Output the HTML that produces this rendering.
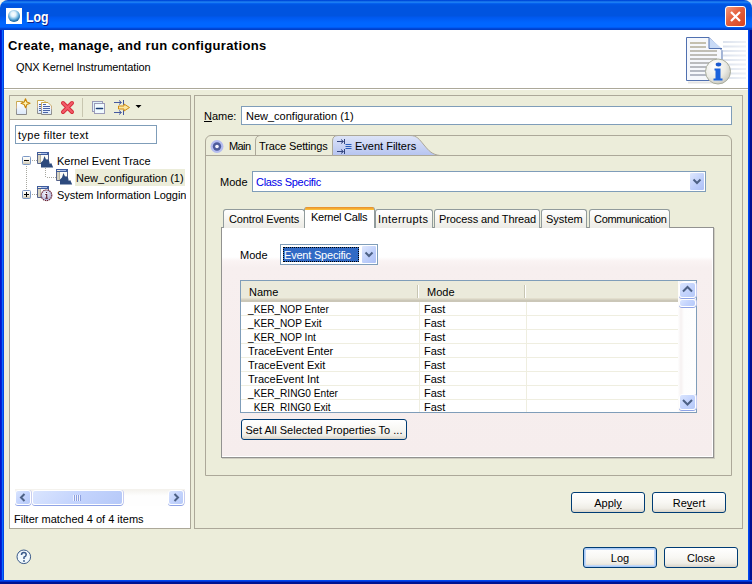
<!DOCTYPE html>
<html><head><meta charset="utf-8">
<style>
*{box-sizing:border-box;margin:0;padding:0}
html,body{width:752px;height:584px;overflow:hidden;background:#f2f1ea}
body{position:relative;font-family:"Liberation Sans",sans-serif;font-size:11px;color:#000}
.a{position:absolute}
.t{position:absolute;white-space:nowrap;line-height:13px}
svg{position:absolute;overflow:visible}
#win{left:0;top:0;width:752px;height:584px;background:#ecedda;border-radius:8px 8px 0 0;overflow:hidden}
#title{left:0;top:0;width:752px;height:30px;background:linear-gradient(to bottom,#0047d5 0px,#0050e0 1px,#2a8ef0 2px,#0a6af5 3px,#0058e6 4px,#0054e0 6px,#0054e0 16px,#0058ee 17px,#0062fa 21px,#0066ff 23px,#0066ff 27px,#0050e8 28px,#0040c8 29px,#0040c8 30px)}
#lb{left:0;top:30px;width:4px;height:554px;background:linear-gradient(to right,#0016c8 0,#0016c8 1px,#0022d8 1px,#0022d8 2px,#0a6cff 2px,#0a6cff 3px,#0044e6 3px)}
#rb{left:748px;top:30px;width:4px;height:554px;background:linear-gradient(to right,#0048f0 0,#0048f0 1px,#0030d0 1px,#0030d0 2px,#001290 2px)}
#bb{left:0;top:580px;width:752px;height:4px;background:linear-gradient(to bottom,#0048f0 0,#0048f0 1px,#0030d0 1px,#0030d0 2px,#001290 2px)}
#hdr{left:4px;top:30px;width:744px;height:59px;background:#fff;border-bottom:1px solid #aca899}
.box{position:absolute;border:1px solid #aca899}
.tb{position:absolute;background:#fff;border:1px solid #7f9db9}
.btn{position:absolute;border:1px solid #003c74;border-radius:3px;background:linear-gradient(to bottom,#fff 0%,#f8f7f3 50%,#efede6 80%,#d8d3c8 100%);text-align:center;line-height:19px;padding-top:1px}
.xtab{position:absolute;top:209px;height:19px;border:1px solid #919b9c;border-bottom:none;border-radius:3px 3px 0 0;background:linear-gradient(to bottom,#fff,#f4f3ee 60%,#ecebe6)}
.cbb{position:absolute;width:16px;border:1px solid #fff;border-radius:2px;background:linear-gradient(135deg,#dfe8fe,#bccdfa 60%,#aec0f6)}
.row{position:absolute;left:241px;width:437px;height:14px;border-bottom:1px solid #f0efe5}
.sbb{position:absolute;border:1px solid #fff;border-radius:3px;background:linear-gradient(135deg,#dae5fe,#c4d4fd 50%,#b6c9f8);box-shadow:0 1px 0 #8fa3e6,1px 0 0 #c7cdf0}
</style></head><body>
<div id="win" class="a">
 <div id="title" class="a"></div>
 <!-- title icon -->
 <div class="a" style="left:6px;top:8px;width:16px;height:16px;background:#fff"></div>
 <svg style="left:6px;top:8px" width="16" height="16"><defs><radialGradient id="gl" cx="45%" cy="35%" r="60%"><stop offset="0" stop-color="#fff"/><stop offset=".35" stop-color="#e4f2fb"/><stop offset=".7" stop-color="#6fb4de"/><stop offset="1" stop-color="#1f6aa8"/></radialGradient></defs><circle cx="8" cy="8" r="6" fill="url(#gl)"/></svg>
 <div class="t" style="left:26px;top:10.5px;font-size:14px;font-weight:bold;color:#fff;text-shadow:1px 1px 0 #0a1e8c;transform:scaleX(0.88);transform-origin:0 0">Log</div>
 <!-- close btn -->
 <div class="a" style="left:725px;top:6px;width:21px;height:21px;border:1px solid #fff;border-radius:3px;background:linear-gradient(135deg,#f39a7c 0%,#e5603d 45%,#d8431f 100%)"></div>
 <svg style="left:725px;top:6px" width="21" height="21"><path d="M6 6L15 15M15 6L6 15" stroke="#fff" stroke-width="2.2"/></svg>

 <div id="hdr" class="a"></div>
 <div class="a" style="left:4px;top:89px;width:744px;height:1px;background:#fff"></div>
 <div class="t" style="left:8px;top:39px;font-size:13px;font-weight:bold;letter-spacing:0.34px">Create, manage, and run configurations</div>
 <div class="t" style="left:16px;top:61px;letter-spacing:-0.12px">QNX Kernel Instrumentation</div>
 <!-- header info icon -->
 <svg style="left:680px;top:30px" width="68" height="58">
  <defs>
   <linearGradient id="st" x1="0" y1="0" x2="1" y2="0"><stop offset="0" stop-color="#d8dfec"/><stop offset="1" stop-color="#eef1f6"/></linearGradient>
   <radialGradient id="ic" cx="35%" cy="30%" r="75%"><stop offset="0" stop-color="#ffffff"/><stop offset=".6" stop-color="#ecece6"/><stop offset="1" stop-color="#c8c8c0"/></radialGradient>
   <linearGradient id="dl" x1="0" y1="0" x2="0" y2="1"><stop offset="0" stop-color="#b4ae96"/><stop offset="1" stop-color="#9ea4b4"/></linearGradient>
  </defs>
  <g stroke="url(#st)" stroke-width="2.2" opacity=".9"><path d="M43 12H66M43 16.5H66M43 21H66M43 25.5H66M43 30H66M43 34.5H66M43 39H66M43 43.5H66M43 48H66"/></g>
  <path d="M8 52.5H43" stroke="#e4e4e4" stroke-width="2"/>
  <path d="M6.5 7.5H29L42 20.5V50.5H6.5Z" fill="#f6f8fc" stroke="#5070b0"/>
  <path d="M29 7.5V18.5H42" fill="#c8daf6" stroke="#5070b0"/>
  <g stroke="url(#dl)" stroke-width="1.4"><path d="M10 13H26M10 17H26M10 21H37M10 25H37M10 29H37M10 33H37M10 37H26M10 41H26M10 45H26"/></g>
  <circle cx="38" cy="41.5" r="12.5" fill="url(#ic)" stroke="#a8ac9c"/>
  <ellipse cx="38.5" cy="34.5" rx="2.8" ry="1.9" fill="#1a5ad0"/>
  <path d="M34.5 38.5H40.5V48.5H42.5V50.5H33.5V48.5H35.5V40.5H34.5Z" fill="#1b62dc"/>
 </svg>

 <!-- LEFT PANEL -->
 <div class="box" style="left:9px;top:95px;width:182px;height:434px;background:#fff"></div>
 <div class="a" style="left:10px;top:96px;width:180px;height:24px;background:#ecedda;border-bottom:1px solid #aca899"></div>
 <!-- toolbar icons -->
 <svg style="left:14px;top:97px" width="20" height="20">
  <defs><linearGradient id="pg" x1="0" y1="0" x2="0" y2="1"><stop offset="0" stop-color="#fff"/><stop offset="1" stop-color="#dce9fa"/></linearGradient>
  <linearGradient id="pb" x1="0" y1="0" x2="0" y2="1"><stop offset="0" stop-color="#c8a848"/><stop offset=".5" stop-color="#d0b090"/><stop offset=".6" stop-color="#9a9a9a"/><stop offset="1" stop-color="#8a8a8a"/></linearGradient></defs>
  <path d="M2.5 4.5H9L12.5 8V17.5H2.5Z" fill="url(#pg)" stroke="url(#pb)"/>
  <path d="M11.5 1.8L12.8 5L16 6.3L12.8 7.6L11.5 10.8L10.2 7.6L7 6.3L10.2 5Z" fill="#fff2b0" stroke="#c8860a" stroke-width="1.1" stroke-linejoin="round"/>
 </svg>
 <svg style="left:34px;top:97px" width="20" height="20">
  <path d="M3.5 3.5H10L12 5.5V16.5H3.5Z" fill="url(#pg)" stroke="url(#pb)"/>
  <path d="M7.5 5.5H14L17.5 9V17.5H7.5Z" fill="url(#pg)" stroke="url(#pb)"/>
  <g stroke="#4a64a8" stroke-width="1"><path d="M5 7.5H7M5 9.5H7M5 11.5H7M5 13.5H7M9 7.5H12M9 9.5H16M9 11.5H16M9 13.5H16M9 15.5H14"/></g>
 </svg>
 <svg style="left:58px;top:98px" width="18" height="18">
  <path d="M5 5L14 14M14 5L5 14" stroke="#d42c38" stroke-width="4" stroke-linecap="round"/><path d="M5 5L14 14M14 5L5 14" stroke="#f25a68" stroke-width="2.2" stroke-linecap="round"/>
 </svg>
 <div class="a" style="left:82px;top:98px;width:1px;height:19px;background:#c8c6b0"></div>
 <svg style="left:88px;top:97px" width="20" height="20">
  <rect x="4.5" y="4.5" width="10" height="10" fill="#dff3fb" stroke="#9a9ab8"/>
  <rect x="6.5" y="6.5" width="10" height="10" fill="#f0faff" stroke="#9a9ab8"/>
  <path d="M8.5 11.5H14.5" stroke="#1a3e78" stroke-width="1.6" stroke-linecap="round"/>
 </svg>
 <svg style="left:110px;top:96px" width="34" height="22">
  <g stroke="#4458a0" fill="none"><path d="M4 6.5H11M9 4.5L11.5 6.5L9 8.5M13.5 4V9M4 16.5H11M9 14.5L11.5 16.5L9 18.5M13.5 14V19"/></g>
  <path d="M8.5 10H14V8L19.5 11.5L14 15V13H8.5Z" fill="#fbe6a0" stroke="#d08a10"/>
  <path d="M25.5 9H31.5L28.5 12Z" fill="#000"/>
 </svg>

 <div class="tb" style="left:15px;top:125px;width:142px;height:19px"></div>
 <div class="t" style="left:18px;top:129px;letter-spacing:0.33px">type filter text</div>

 <!-- tree -->
 <svg style="left:20px;top:150px" width="60" height="56">
  <path d="M6 16h1v1h-1zM6 18h1v1h-1zM6 20h1v1h-1zM6 22h1v1h-1zM6 24h1v1h-1zM6 26h1v1h-1zM6 28h1v1h-1zM6 30h1v1h-1zM6 32h1v1h-1zM6 34h1v1h-1zM6 36h1v1h-1zM6 38h1v1h-1zM12 10h1v1h-1zM14 10h1v1h-1zM16 10h1v1h-1zM12 44h1v1h-1zM14 44h1v1h-1zM16 44h1v1h-1zM25 18h1v1h-1zM25 20h1v1h-1zM25 22h1v1h-1zM25 24h1v1h-1zM25 26h1v1h-1zM27 27h1v1h-1zM29 27h1v1h-1zM31 27h1v1h-1zM33 27h1v1h-1zM35 27h1v1h-1z" fill="#a8a8a0"/>
  <defs><linearGradient id="ex" x1="0" y1="0" x2="0" y2="1"><stop offset="0" stop-color="#fff"/><stop offset=".55" stop-color="#f2f0e8"/><stop offset="1" stop-color="#c8c0a8"/></linearGradient></defs>
  <rect x="2.5" y="6.5" width="8" height="8" rx="1" fill="url(#ex)" stroke="#7c98c4"/>
  <path d="M4 10.5H9" stroke="#000"/>
  <rect x="2.5" y="40.5" width="8" height="8" rx="1" fill="url(#ex)" stroke="#7c98c4"/>
  <path d="M4 44.5H9M6.5 42V47" stroke="#000"/>
 </svg>
 <svg style="left:36px;top:151px" width="20" height="18">
  <path d="M1.5 12.5V1.5H12.5V12.5Z" fill="#fbfaf6" stroke="#55628a"/>
  <rect x="1" y="1" width="12" height="3" fill="#3f5c9c"/><rect x="2" y="2" width="9" height="1" fill="#a9bde8"/><rect x="2" y="2" width="3" height="1" fill="#f4ecd8"/>
  <rect x="2" y="4" width="3" height="8" fill="#d6d2c0"/><rect x="4" y="4" width="1" height="8" fill="#b8b4a0"/>
  <path d="M5 16.5V11.5L7 9.5L8.5 5L10 8.5L11.3 8.2L13 9.5L13.8 13L15.2 12L17.2 16.5Z" fill="#2d4a7d"/>
 </svg>
 <div class="t" style="left:57px;top:155px">Kernel Event Trace</div>
 <svg style="left:55px;top:168px" width="20" height="18">
  <path d="M1.5 12.5V1.5H12.5V12.5Z" fill="#fbfaf6" stroke="#55628a"/>
  <rect x="1" y="1" width="12" height="3" fill="#3f5c9c"/><rect x="2" y="2" width="9" height="1" fill="#a9bde8"/><rect x="2" y="2" width="3" height="1" fill="#f4ecd8"/>
  <rect x="2" y="4" width="3" height="8" fill="#d6d2c0"/><rect x="4" y="4" width="1" height="8" fill="#b8b4a0"/>
  <path d="M5 16.5V11.5L7 9.5L8.5 5L10 8.5L11.3 8.2L13 9.5L13.8 13L15.2 12L17.2 16.5Z" fill="#2d4a7d"/>
 </svg>
 <div class="a" style="left:75px;top:169px;width:110px;height:17px;background:#ecedda"></div>
 <div class="t" style="left:76px;top:172px">New_configuration (1)</div>
 <svg style="left:36px;top:185px" width="20" height="18">
  <path d="M1.5 12.5V1.5H12.5V12.5Z" fill="#fbfaf6" stroke="#55628a"/>
  <rect x="1" y="1" width="12" height="3" fill="#3f5c9c"/><rect x="2" y="2" width="9" height="1" fill="#a9bde8"/><rect x="2" y="2" width="3" height="1" fill="#f4ecd8"/>
  <rect x="2" y="4" width="3" height="8" fill="#d6d2c0"/><rect x="4" y="4" width="1" height="8" fill="#b8b4a0"/>
  <defs><radialGradient id="ig" cx="40%" cy="35%" r="70%"><stop offset="0" stop-color="#f4f4fc"/><stop offset="1" stop-color="#a8b0d8"/></radialGradient></defs>
  <circle cx="10.5" cy="10.3" r="5.3" fill="url(#ig)" stroke="#6a2030" stroke-width="1.1" stroke-dasharray="1.4 0.7"/>
  <path d="M10.5 7V8M9.3 9.5H10.7V13M9.3 13.2H11.8" stroke="#5a1a28" stroke-width="1.1" fill="none"/>
 </svg>
 <div class="t" style="left:57px;top:189px;width:129px;overflow:hidden;letter-spacing:-0.06px">System Information Loggin</div>

 <!-- left h-scrollbar -->
 <div class="a" style="left:15px;top:489px;width:170px;height:17px;background:linear-gradient(to bottom,#f3f1ec,#fefefe 40%,#fefefe)"></div>
 <div class="sbb" style="left:15px;top:490px;width:16px;height:15px"></div>
 <svg style="left:15px;top:490px" width="16" height="15"><path d="M9.5 4L6 7.5L9.5 11" stroke="#4d6185" stroke-width="2" fill="none"/></svg>
 <div class="sbb" style="left:32px;top:490px;width:91px;height:15px"></div>
 <svg style="left:72px;top:494px" width="10" height="8"><path d="M1.5 1V7M3.5 1V7M5.5 1V7M7.5 1V7" stroke="#eef2fe"/><path d="M2.5 1V7M4.5 1V7M6.5 1V7M8.5 1V7" stroke="#8ca0e0"/></svg>
 <div class="sbb" style="left:168px;top:490px;width:16px;height:15px"></div>
 <svg style="left:168px;top:490px" width="16" height="15"><path d="M6.5 4L10 7.5L6.5 11" stroke="#4d6185" stroke-width="2" fill="none"/></svg>

 <div class="t" style="left:14px;top:513px">Filter matched 4 of 4 items</div>

 <!-- RIGHT PANEL -->
 <div class="box" style="left:194px;top:95px;width:549px;height:434px"></div>
 <div class="t" style="left:204px;top:110px"><u>N</u>ame:</div>
 <div class="tb" style="left:241px;top:106px;width:491px;height:19px"></div>
 <div class="t" style="left:246px;top:110px">New_configuration (1)</div>

 <!-- outer tab folder -->
 <div class="a" style="left:205px;top:135px;width:527px;height:341px;border:1px solid #aca899;border-radius:6px 6px 0 0"></div>
 <div class="a" style="left:206px;top:155px;width:525px;height:1px;background:#aca899"></div>
 <svg style="left:205px;top:135px" width="240" height="21">
  <defs><linearGradient id="ef" x1="0" y1="0" x2="0" y2="1"><stop offset="0" stop-color="#dde4f8"/><stop offset="1" stop-color="#b6c4f0"/></linearGradient></defs>
  <path d="M50.5 20V6Q50.5 1 55 0.5" stroke="#aca899" fill="none"/>
  <path d="M127.5 20.5V6Q127.5 0.5 133 0.5H205C212 0.5 214 4 219 10C224 16 227 19.5 235 20.5Z" fill="url(#ef)" stroke="#aca899"/>
 </svg>
 <svg style="left:205px;top:135px" width="30" height="21">
  <circle cx="12" cy="11.5" r="6.5" fill="#b4bcf0"/>
  <circle cx="12" cy="11.5" r="4.2" fill="#4d5c9c"/>
  <circle cx="12" cy="11.5" r="1.8" fill="#f4f4ff"/>
 </svg>
 <div class="t" style="left:229px;top:140px;letter-spacing:-0.6px">Main</div>
 <div class="t" style="left:259px;top:140px;letter-spacing:-0.13px">Trace Settings</div>
 <svg style="left:336px;top:137px" width="18" height="17">
  <g stroke="#33457e" fill="none"><path d="M1 4.5H7M5 2.5L7.5 4.5L5 6.5M8.5 2V7M1 14.5H7M5 12.5L7.5 14.5L5 16.5M8.5 12V17"/></g><g stroke="#2a5cb8" fill="none"><path d="M9.5 7.5H15.5M9.5 9.5H15.5M9.5 11.5H15.5"/></g>
 </svg>
 <div class="t" style="left:355px;top:140px">Event Filters</div>

 <div class="t" style="left:220px;top:176px">Mode</div>
 <div class="tb" style="left:252px;top:171px;width:454px;height:21px"></div>
 <div class="t" style="left:256px;top:176px;color:#0000e8;letter-spacing:-0.3px">Class Specific</div>
 <div class="cbb" style="left:689px;top:172px;height:19px"></div>
 <svg style="left:689px;top:172px" width="16" height="19"><path d="M4.5 7.5L8 11L11.5 7.5" stroke="#4d6185" stroke-width="2" fill="none"/></svg>

 <!-- inner tab folder -->
 <div class="a" style="left:221px;top:227px;width:493px;height:231px;border:1px solid #929290;box-shadow:inset -1px -1px 0 #fff,1px 1px 0 #cfcdc0;background:linear-gradient(to bottom,#fff 0,#fff 29px,#faf3f3 33px,#f7efef 40px,#f6eded 100%)"></div>
 <div class="xtab" style="left:223px;width:82px"></div>
 <div class="a" style="left:304px;top:207px;width:71px;height:21px;background:#fff;border:1px solid #919b9c;border-bottom:none;border-radius:3px 3px 0 0"></div>
 <div class="a" style="left:305px;top:207px;width:69px;height:3px;background:linear-gradient(to bottom,#e68b2c,#ffc73c);border-radius:2px 2px 0 0"></div>
 <div class="xtab" style="left:375px;width:58px"></div>
 <div class="xtab" style="left:434px;width:106px"></div>
 <div class="xtab" style="left:541px;width:46px"></div>
 <div class="xtab" style="left:589px;width:81px"></div>
 <div class="t" style="left:229px;top:213px;letter-spacing:-0.15px">Control Events</div>
 <div class="t" style="left:311px;top:211px;letter-spacing:-0.25px">Kernel Calls</div>
 <div class="t" style="left:378px;top:213px;letter-spacing:0.4px">Interrupts</div>
 <div class="t" style="left:439px;top:213px;letter-spacing:-0.1px">Process and Thread</div>
 <div class="t" style="left:546px;top:213px">System</div>
 <div class="t" style="left:594px;top:213px;letter-spacing:-0.3px">Communication</div>

 <div class="t" style="left:240px;top:249px">Mode</div>
 <div class="tb" style="left:280px;top:244px;width:98px;height:21px"></div>
 <div class="a" style="left:283px;top:247px;width:76px;height:15px;background:#316ac5;border:1px dotted #000"></div>
 <div class="t" style="left:284px;top:249px;color:#fff;letter-spacing:-0.2px">Event Specific</div>
 <div class="cbb" style="left:361px;top:245px;height:19px"></div>
 <svg style="left:361px;top:245px" width="16" height="19"><path d="M4.5 7.5L8 11L11.5 7.5" stroke="#4d6185" stroke-width="2" fill="none"/></svg>

 <!-- table -->
 <div class="tb" style="left:240px;top:280px;width:457px;height:133px"></div>
 <div class="a" style="left:241px;top:281px;width:437px;height:21px;background:linear-gradient(to bottom,#ebeadb 0,#ebeadb 17px,#e2decd 17px,#e2decd 18px,#d6d2c2 18px,#d6d2c2 19px,#cbc7b8 19px,#cbc7b8 20px,#cbc7b8 21px)"></div>
 <div class="a" style="left:417px;top:285px;width:1px;height:13px;background:#c7c5b2"></div>
 <div class="a" style="left:418px;top:285px;width:1px;height:13px;background:#fff"></div>
 <div class="a" style="left:524px;top:285px;width:1px;height:13px;background:#c7c5b2"></div>
 <div class="a" style="left:525px;top:285px;width:1px;height:13px;background:#fff"></div>
 <div class="t" style="left:249px;top:286px">Name</div>
 <div class="t" style="left:427px;top:286px">Mode</div>
 <div class="a" style="left:241px;top:302px;width:437px;height:110px;overflow:hidden">
  <div class="a" style="left:178px;top:0;width:1px;height:110px;background:#efeee0"></div>
  <div class="a" style="left:285px;top:0;width:1px;height:110px;background:#efeee0"></div>
  <div class="a" style="left:0;top:13px;width:437px;height:1px;background:#efeee0"></div>
  <div class="t" style="left:7px;top:1px;transform:scaleX(0.92);transform-origin:0 0">_KER_NOP Enter</div>
  <div class="t" style="left:183px;top:1px">Fast</div>
  <div class="a" style="left:0;top:27px;width:437px;height:1px;background:#efeee0"></div>
  <div class="t" style="left:7px;top:15px;transform:scaleX(0.92);transform-origin:0 0">_KER_NOP Exit</div>
  <div class="t" style="left:183px;top:15px">Fast</div>
  <div class="a" style="left:0;top:41px;width:437px;height:1px;background:#efeee0"></div>
  <div class="t" style="left:7px;top:29px;transform:scaleX(0.92);transform-origin:0 0">_KER_NOP Int</div>
  <div class="t" style="left:183px;top:29px">Fast</div>
  <div class="a" style="left:0;top:55px;width:437px;height:1px;background:#efeee0"></div>
  <div class="t" style="left:7px;top:43px">TraceEvent Enter</div>
  <div class="t" style="left:183px;top:43px">Fast</div>
  <div class="a" style="left:0;top:69px;width:437px;height:1px;background:#efeee0"></div>
  <div class="t" style="left:7px;top:57px">TraceEvent Exit</div>
  <div class="t" style="left:183px;top:57px">Fast</div>
  <div class="a" style="left:0;top:83px;width:437px;height:1px;background:#efeee0"></div>
  <div class="t" style="left:7px;top:71px">TraceEvent Int</div>
  <div class="t" style="left:183px;top:71px">Fast</div>
  <div class="a" style="left:0;top:97px;width:437px;height:1px;background:#efeee0"></div>
  <div class="t" style="left:7px;top:85px;transform:scaleX(0.92);transform-origin:0 0">_KER_RING0 Enter</div>
  <div class="t" style="left:183px;top:85px">Fast</div>
  <div class="a" style="left:0;top:111px;width:437px;height:1px;background:#efeee0"></div>
  <div class="t" style="left:7px;top:99px;transform:scaleX(0.92);transform-origin:0 0">_KER_RING0 Exit</div>
  <div class="t" style="left:183px;top:99px">Fast</div>
 </div>
 <div class="a" style="left:678px;top:281px;width:18px;height:131px;background:linear-gradient(to right,#fefefe 0,#f6f1f1 3px,#fdfdfd 6px,#fefefe 100%)"></div>
 <div class="sbb" style="left:679px;top:282px;width:17px;height:16px"></div>
 <svg style="left:679px;top:282px" width="17" height="16"><path d="M4 9.5L8.5 5L13 9.5" stroke="#4d6185" stroke-width="2" fill="none"/></svg>
 <div class="sbb" style="left:679px;top:299px;width:17px;height:8px"></div>
 <div class="sbb" style="left:679px;top:394px;width:17px;height:16px"></div>
 <svg style="left:679px;top:394px" width="17" height="16"><path d="M4 6L8.5 10.5L13 6" stroke="#4d6185" stroke-width="2" fill="none"/></svg>

 <div class="btn" style="left:241px;top:419px;width:166px;height:21px">Set All Selected Properties To ...</div>

 <div class="btn" style="left:571px;top:492px;width:74px;height:21px">Appl<u>y</u></div>
 <div class="btn" style="left:652px;top:492px;width:74px;height:21px">Re<u>v</u>ert</div>
 <div class="btn" style="left:583px;top:547px;width:74px;height:21px;box-shadow:inset 0 0 0 1px #a8caf6,inset 0 0 0 2px #c2d8f8">Log</div>
 <div class="btn" style="left:664px;top:547px;width:74px;height:21px">Close</div>

 <!-- help -->
 <svg style="left:16px;top:549px" width="16" height="16">
  <circle cx="7.8" cy="7.8" r="6.8" fill="#f0f8fc" stroke="#3a5a8a"/>
  <path d="M5.5 6Q5.5 3.6 7.8 3.6Q10.2 3.6 10.2 5.8Q10.2 7.4 8 8.2V10" stroke="#3a5a8a" stroke-width="1.5" fill="none"/>
  <circle cx="8" cy="12" r="0.9" fill="#3a5a8a"/>
 </svg>
</div>
<div id="lb" class="a"></div>
<div id="rb" class="a"></div>
<div id="bb" class="a"></div>
</body></html>
